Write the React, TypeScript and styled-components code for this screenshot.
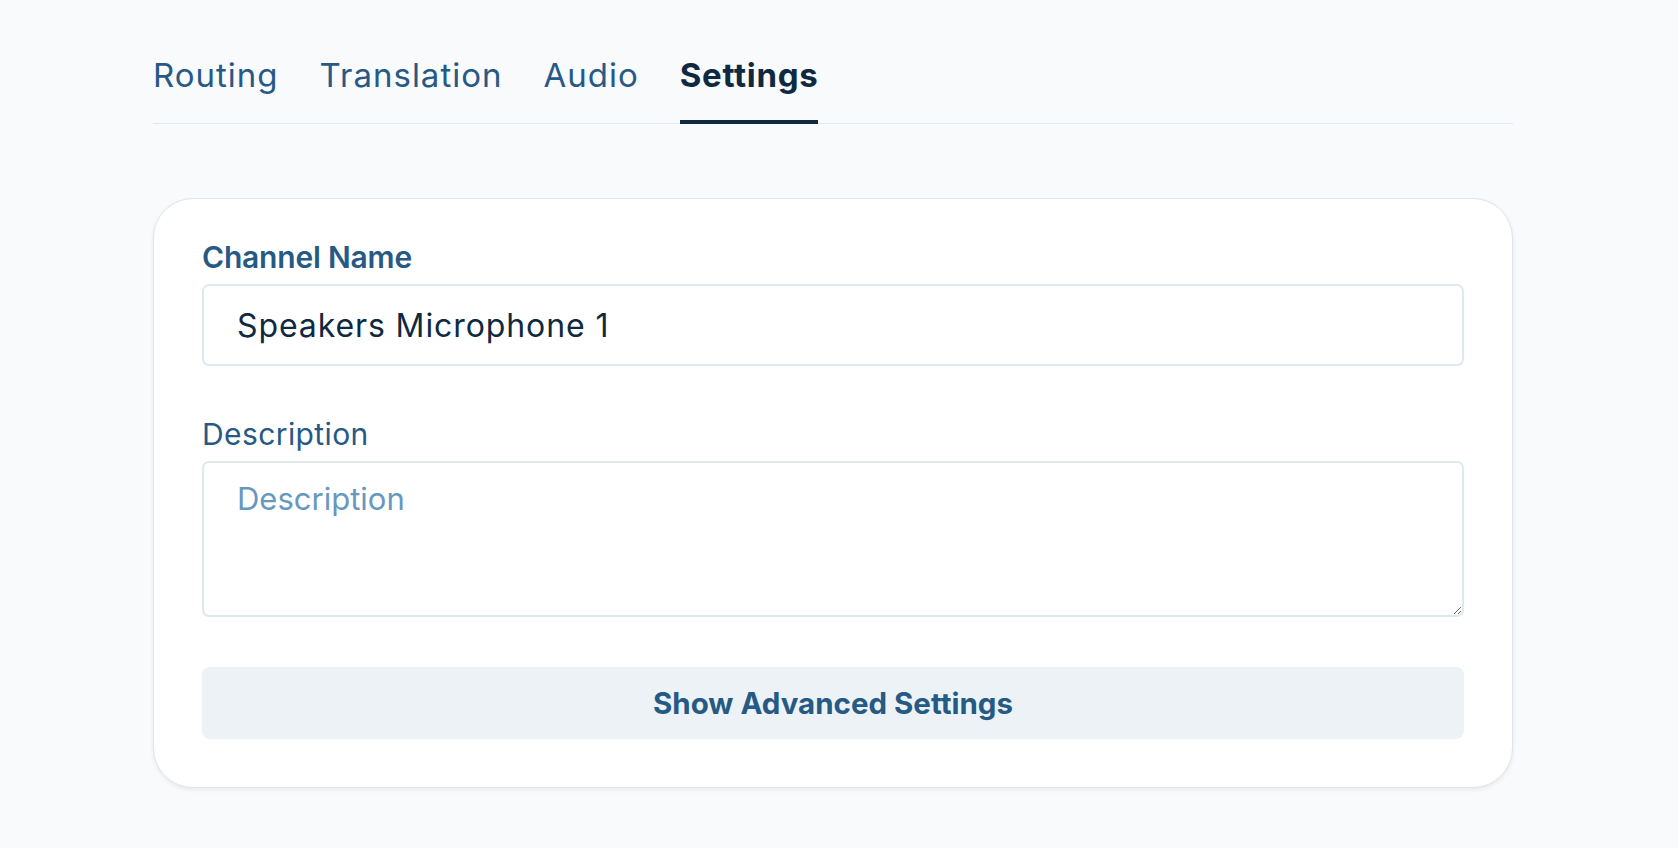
import React, { useState } from 'react';
import styled, { createGlobalStyle } from 'styled-components';

const GlobalStyle = createGlobalStyle`
  html, body {
    margin: 0;
    padding: 0;
    background: #f8fafc;
    font-family: Inter, 'Noto Sans', sans-serif;
  }
`;

const tabs = ['Routing', 'Translation', 'Audio', 'Settings'];

const App = () => {
  const [active, setActive] = useState('Settings');
  const [name, setName] = useState('Speakers Microphone 1');
  const [description, setDescription] = useState('');

  return (
    <Page>
      <GlobalStyle />
      <Wrap>
        <TabBar>
          {tabs.map((t) => (
            <Tab key={t} $active={t === active} onClick={() => setActive(t)}>
              {t}
            </Tab>
          ))}
        </TabBar>

        <Card>
          <Field>
            <Label $strong>Channel Name</Label>
            <TextInput value={name} onChange={(e) => setName(e.target.value)} />
          </Field>
          <Field>
            <Label>Description</Label>
            <TextArea
              placeholder="Description"
              value={description}
              onChange={(e) => setDescription(e.target.value)}
            />
          </Field>
          <AdvancedButton>Show Advanced Settings</AdvancedButton>
        </Card>
      </Wrap>
    </Page>
  );
};

export default App;

const Page = styled.div`
  min-height: 848px;
  background: #f8fafc;
`;

const Wrap = styled.div`
  width: 1360px;
  margin-left: 153px;
  padding-top: 55px;
`;

const TabBar = styled.div`
  display: flex;
  gap: 41px;
  border-bottom: 1px solid #e1e8ef;
`;

const Tab = styled.button<{ $active?: boolean }>`
  background: none;
  border: none;
  padding: 0 0 25px;
  margin-bottom: -1px;
  border-bottom: 4px solid ${(p) => (p.$active ? '#0f2940' : 'transparent')};
  font-family: inherit;
  font-size: 33px;
  line-height: 40px;
  letter-spacing: ${(p) => (p.$active ? '0.7px' : '1px')};
  font-weight: ${(p) => (p.$active ? 700 : 400)};
  color: ${(p) => (p.$active ? '#0f2940' : '#285985')};
  cursor: pointer;
`;

const Card = styled.div`
  margin-top: 74px;
  background: #ffffff;
  border: 1px solid #dde6ec;
  border-radius: 40px;
  box-shadow: 0 2px 4px rgba(15, 41, 64, 0.07);
  padding: 40px 48px 48px;
  display: flex;
  flex-direction: column;
  gap: 50px;
`;

const Field = styled.div`
  display: flex;
  flex-direction: column;
  gap: 9px;
`;

const Label = styled.label<{ $strong?: boolean }>`
  font-size: 30px;
  line-height: 36px;
  font-weight: ${(p) => (p.$strong ? 600 : 400)};
  letter-spacing: ${(p) => (p.$strong ? '-0.2px' : '0.4px')};
  color: #265a85;
`;

const TextInput = styled.input`
  box-sizing: border-box;
  height: 82px;
  width: 100%;
  border: 2px solid #dfe8ed;
  border-radius: 7px;
  padding: 0 33px;
  font-family: inherit;
  font-size: 32px;
  letter-spacing: 0.9px;
  color: #0f2940;
  background: #fff;
  outline: none;
`;

const TextArea = styled.textarea`
  box-sizing: border-box;
  height: 156px;
  width: 100%;
  border: 2px solid #dfe8ed;
  border-radius: 7px;
  padding: 16px 33px;
  font-family: inherit;
  font-size: 31px;
  line-height: 40px;
  color: #0f2940;
  background: #fff;
  outline: none;
  resize: vertical;

  &::placeholder {
    color: #6898be;
  }
`;

const AdvancedButton = styled.button`
  height: 72px;
  border: none;
  border-radius: 8px;
  background: #edf2f7;
  font-family: inherit;
  font-size: 29.5px;
  font-weight: 700;
  color: #255a85;
  cursor: pointer;
`;
